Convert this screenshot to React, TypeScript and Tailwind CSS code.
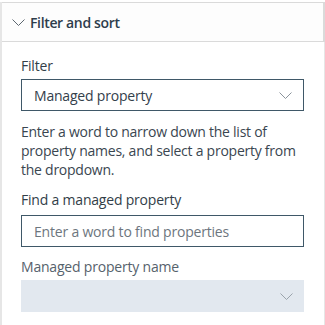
function Chevron({ className }: { className?: string }) {
  return (
    <svg
      className={className}
      width="13"
      height="7"
      viewBox="0 0 13 7"
      fill="none"
      stroke="currentColor"
      strokeWidth="1"
    >
      <path d="M0.5 0.5 L6.5 6.5 L12.5 0.5" />
    </svg>
  );
}

export default function App() {
  return (
    <div
      className="h-[325px] w-[325px] bg-white pt-[2px] text-[14px] text-[#323e48]"
      style={{ fontFamily: '"Segoe UI", "Open Sans", sans-serif' }}
    >
      <div className="h-full border-r border-l-2 border-[#e6e6e6]">
        <div className="-mr-px flex h-[40px] items-center gap-[5px] border-y border-r-2 border-[#dadada] bg-[#fdfdfd] pl-[10px]">
          <Chevron className="mt-[1px] text-[#5d6770]" />
          <span className="text-[14px] font-semibold tracking-[-0.35px] text-[#2e3d4c]">
            Filter and sort
          </span>
        </div>
        <div className="flex flex-col px-[19px] pt-[14px]">
          <label className="leading-[20px] tracking-[-0.2px]">Filter</label>
          <div className="mt-[3px] flex h-[32px] w-[283px] items-center justify-between border border-[#3f5868] pl-[12px] pr-[11px]">
            <span className="text-[#33404b] tracking-[-0.2px]">Managed property</span>
            <Chevron className="text-[#8a939b]" />
          </div>
          <p className="mt-[11px] w-[283px] leading-[19px] tracking-[-0.25px] text-[#3a4650]">
            Enter a word to narrow down the list of property names, and select a property from
            the dropdown.
          </p>
          <label className="mt-[11px] leading-[20px] tracking-[-0.2px]">Find a managed property</label>
          <div className="mt-[5px] flex h-[32px] w-[283px] items-center border border-[#3f5868] pl-[12px]">
            <span className="text-[#6d767e] tracking-[-0.2px]">Enter a word to find properties</span>
          </div>
          <label className="mt-[10px] leading-[20px] tracking-[-0.2px] text-[#56626c]">
            Managed property name
          </label>
          <div className="mt-[3px] flex h-[32px] w-[283px] items-center justify-end bg-[#e2e8ef] pr-[11px]">
            <Chevron className="text-[#9aa3ab]" />
          </div>
        </div>
      </div>
    </div>
  );
}
